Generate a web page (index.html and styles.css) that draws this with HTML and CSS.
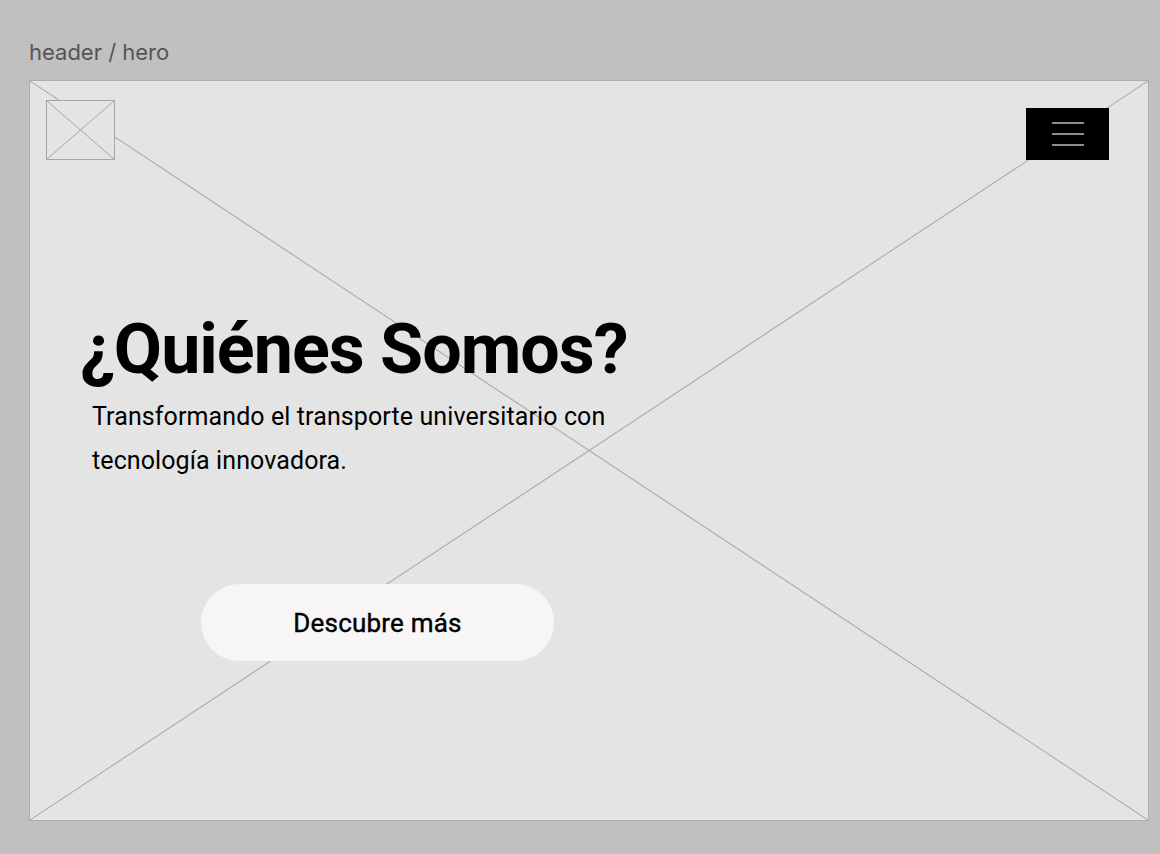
FILE: index.html
```html
<!DOCTYPE html>
<html lang="es">
<head>
<meta charset="utf-8">
<title>header / hero</title>
<link rel="stylesheet" href="styles.css">
</head>
<body>
<div class="label">header / hero</div>
<section class="frame">
  <svg class="placeholder" viewBox="0 0 100 100" preserveAspectRatio="none" aria-hidden="true">
    <line x1="0" y1="0" x2="100" y2="100" vector-effect="non-scaling-stroke"/>
    <line x1="100" y1="0" x2="0" y2="100" vector-effect="non-scaling-stroke"/>
  </svg>
  <header class="topbar">
    <div class="logo">
      <svg viewBox="0 0 100 100" preserveAspectRatio="none" aria-hidden="true">
        <line x1="0" y1="0" x2="100" y2="100" vector-effect="non-scaling-stroke"/>
        <line x1="100" y1="0" x2="0" y2="100" vector-effect="non-scaling-stroke"/>
      </svg>
    </div>
    <button class="menu" aria-label="Menú">
      <span></span><span></span><span></span>
    </button>
  </header>
  <div class="hero">
    <h1 class="title">¿Quiénes Somos?</h1>
    <p class="subtitle">Transformando el transporte universitario con<br>tecnología innovadora.</p>
    <a class="cta" href="#">Descubre más</a>
  </div>
</section>
</body>
</html>
```

FILE: styles.css
```css
* { box-sizing: border-box; }
html, body { margin: 0; padding: 0; }
body {
  background: #c0c0c0;
  width: 1160px;
  height: 854px;
  overflow: hidden;
  font-family: Roboto, "Liberation Sans", sans-serif;
}
.label {
  font-family: Inter, "Liberation Sans", sans-serif;
  font-size: 22px;
  color: #555555;
  padding: 39px 0 0 29px;
  height: 80px;
  line-height: 27px;
}
.frame {
  position: relative;
  margin-left: 29px;
  width: 1120px;
  height: 741px;
  background: #e4e4e4;
  border: 1px solid #adadad;
}
.placeholder {
  position: absolute;
  inset: 0;
  width: 100%;
  height: 100%;
}
.placeholder line, .logo line {
  stroke: #a6a6a6;
  stroke-width: 1;
}
.topbar {
  position: relative;
  display: flex;
  justify-content: space-between;
  align-items: flex-start;
  padding: 19px 39px 0 16px;
}
.logo {
  width: 69px;
  height: 60px;
  border: 1px solid #a6a6a6;
  background: #e4e4e4;
}
.logo svg { display: block; width: 100%; height: 100%; }
.menu {
  margin-top: 8px;
  width: 83px;
  height: 52px;
  background: #000;
  border: none;
  padding: 0;
  display: flex;
  flex-direction: column;
  align-items: center;
  justify-content: center;
  gap: 9px;
}
.menu span {
  display: block;
  width: 32px;
  height: 2px;
  background: #8c8c8c;
}
.hero {
  position: relative;
  padding: 148px 0 0 50px;
}
.title {
  margin: 0;
  font-family: Roboto, sans-serif;
  font-weight: 700;
  font-size: 70px;
  line-height: 82px;
  letter-spacing: -1px;
  color: #000;
}
.subtitle {
  margin: 5px 0 0 12px;
  font-size: 25px;
  line-height: 44px;
  letter-spacing: 0.1px;
  color: #000;
}
.cta {
  display: flex;
  align-items: center;
  justify-content: center;
  margin: 101px 0 0 121px;
  width: 353px;
  height: 77px;
  border-radius: 39px;
  background: #f7f5f6;
  color: #000;
  text-decoration: none;
  font-weight: 400;
  font-size: 26px;
  letter-spacing: 0.2px;
  -webkit-text-stroke: 0.4px #000;
}
```
